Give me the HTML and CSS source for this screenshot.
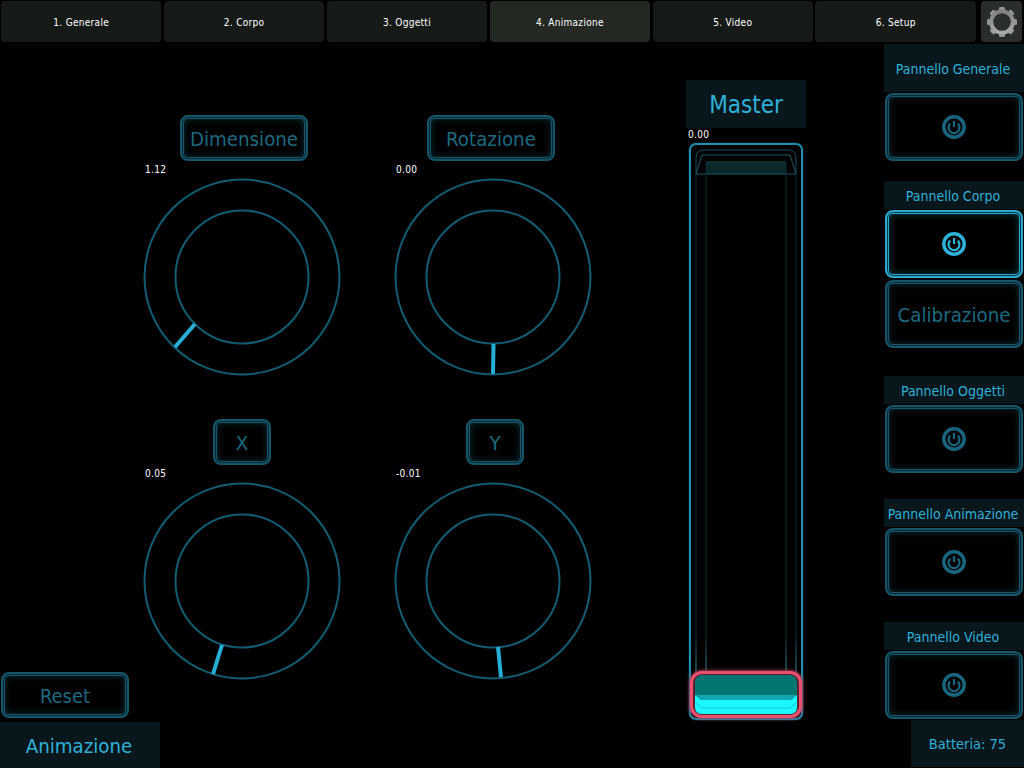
FILE: index.html
```html
<!DOCTYPE html>
<html lang="en">
<head>
    <meta charset="UTF-8">
    <meta name="viewport" content="width=device-width, initial-scale=1.0">
    <title>Animazione</title>
    <link rel="stylesheet" href="styles.css">
</head>
<body>
    <nav class="tabs">
        <div class="tab">1. Generale</div>
        <div class="tab">2. Corpo</div>
        <div class="tab">3. Oggetti</div>
        <div class="tab active">4. Animazione</div>
        <div class="tab">5. Video</div>
        <div class="tab">6. Setup</div>
        <div class="gear-button">
            <svg width="40" height="40" viewBox="0 0 40 40">
                <defs>
                    <linearGradient id="gearFill" x1="0" y1="0" x2="0" y2="1">
                        <stop offset="0" stop-color="#7f817f"/>
                        <stop offset="1" stop-color="#a8aaa8"/>
                    </linearGradient>
                </defs>
                <g fill="#959795">
                    <rect x="17" y="5" width="6" height="5" rx="1.5"/>
                    <rect x="17" y="5" width="6" height="5" rx="1.5" transform="rotate(45 20 20)"/>
                    <rect x="17" y="5" width="6" height="5" rx="1.5" transform="rotate(90 20 20)"/>
                    <rect x="17" y="5" width="6" height="5" rx="1.5" transform="rotate(135 20 20)"/>
                    <rect x="17" y="5" width="6" height="5" rx="1.5" transform="rotate(180 20 20)"/>
                    <rect x="17" y="5" width="6" height="5" rx="1.5" transform="rotate(225 20 20)"/>
                    <rect x="17" y="5" width="6" height="5" rx="1.5" transform="rotate(270 20 20)"/>
                    <rect x="17" y="5" width="6" height="5" rx="1.5" transform="rotate(315 20 20)"/>
                </g>
                <circle cx="20" cy="20" r="10.8" fill="none" stroke="url(#gearFill)" stroke-width="4"/>
            </svg>
        </div>
    </nav>

    <div class="workspace">
        <section class="left">
            <div class="knobs">
                <div class="knob">
                    <div class="frame-button wide nudge-right">Dimensione</div>
                    <div class="knob-body">
                        <div class="value">1.12</div>
                        <svg class="dial" width="198" height="198" viewBox="0 0 198 198">
                            <circle cx="99" cy="99" r="97.5"/>
                            <circle cx="99" cy="99" r="66.5"/>
                            <line x1="52" y1="146" x2="32" y2="169"/>
                        </svg>
                    </div>
                </div>
                <div class="knob">
                    <div class="frame-button wide nudge-left">Rotazione</div>
                    <div class="knob-body">
                        <div class="value">0.00</div>
                        <svg class="dial" width="198" height="198" viewBox="0 0 198 198">
                            <circle cx="99" cy="99" r="97.5"/>
                            <circle cx="99" cy="99" r="66.5"/>
                            <line x1="99.5" y1="166" x2="99" y2="196"/>
                        </svg>
                    </div>
                </div>
                <div class="knob">
                    <div class="frame-button small">X</div>
                    <div class="knob-body">
                        <div class="value">0.05</div>
                        <svg class="dial" width="198" height="198" viewBox="0 0 198 198">
                            <circle cx="99" cy="99" r="97.5"/>
                            <circle cx="99" cy="99" r="66.5"/>
                            <line x1="79" y1="163" x2="70" y2="192"/>
                        </svg>
                    </div>
                </div>
                <div class="knob">
                    <div class="frame-button small nudge-right">Y</div>
                    <div class="knob-body">
                        <div class="value">-0.01</div>
                        <svg class="dial" width="198" height="198" viewBox="0 0 198 198">
                            <circle cx="99" cy="99" r="97.5"/>
                            <circle cx="99" cy="99" r="66.5"/>
                            <line x1="104" y1="165" x2="107" y2="195"/>
                        </svg>
                    </div>
                </div>
            </div>
            <div class="footer">
                <div class="frame-button reset">Reset</div>
                <div class="heading page-title">Animazione</div>
            </div>
        </section>

        <section class="master">
            <div class="heading master-title">Master</div>
            <div class="value master-value">0.00</div>
            <div class="fader">
                <svg class="fader-lines" width="114" height="577" viewBox="0 0 114 577">
                    <defs>
                        <linearGradient id="faderRail" gradientUnits="userSpaceOnUse" x1="0" y1="31" x2="0" y2="530">
                            <stop offset="0" stop-color="#0c2a33"/>
                            <stop offset="0.92" stop-color="#0c2a33"/>
                            <stop offset="1" stop-color="#3f8c9c"/>
                        </linearGradient>
                        <linearGradient id="faderCap" x1="0" y1="0" x2="0" y2="1">
                            <stop offset="0" stop-color="#0d2f30"/>
                            <stop offset="1" stop-color="#0a2224"/>
                        </linearGradient>
                    </defs>
                    <rect x="17" y="18" width="80" height="13" fill="url(#faderCap)"/>
                    <path d="M7 31 V15 Q7 7 15 7 H99 Q107 7 107 15 V31" fill="none" stroke="#14505f"/>
                    <path d="M7 31 L13 12 H101 L107 31 Z" fill="none" stroke="#185a6a"/>
                    <path d="M7 31 V530 M107 31 V530 M17 18 V530 M97 18 V530" fill="none" stroke="url(#faderRail)"/>
                </svg>
                <div class="fader-handle">
                    <svg class="handle-fill" width="102" height="39" viewBox="0 0 102 39">
                        <rect width="102" height="39" rx="7" fill="#007572"/>
                        <path d="M1 20 H101 L96 25 H6 Z" fill="#10a8b0"/>
                        <path d="M0 20 L6 25 H96 L102 20 V32 Q102 39 95 39 H7 Q0 39 0 32 Z" fill="#1cf8ff"/>
                        <path d="M1 28 L7 33 H95 L101 28" fill="none" stroke="#12c4d4"/>
                    </svg>
                </div>
            </div>
        </section>

        <aside class="panels">
            <div class="heading panel-title first">Pannello Generale</div>
            <div class="frame-button panel">
                <svg class="power" width="26" height="26" viewBox="0 0 26 26">
                    <circle cx="13" cy="13" r="10.2"/>
                    <path d="M9.2 9.6 A5.5 5.5 0 1 0 16.8 9.6 M13 7 V13"/>
                </svg>
            </div>
            <div class="heading panel-title gap-corpo">Pannello Corpo</div>
            <div class="frame-button panel on">
                <svg class="power" width="26" height="26" viewBox="0 0 26 26">
                    <circle cx="13" cy="13" r="10.2"/>
                    <path d="M9.2 9.6 A5.5 5.5 0 1 0 16.8 9.6 M13 7 V13"/>
                </svg>
            </div>
            <div class="frame-button panel calibration">Calibrazione</div>
            <div class="heading panel-title gap-oggetti">Pannello Oggetti</div>
            <div class="frame-button panel">
                <svg class="power" width="26" height="26" viewBox="0 0 26 26">
                    <circle cx="13" cy="13" r="10.2"/>
                    <path d="M9.2 9.6 A5.5 5.5 0 1 0 16.8 9.6 M13 7 V13"/>
                </svg>
            </div>
            <div class="heading panel-title gap-next">Pannello Animazione</div>
            <div class="frame-button panel">
                <svg class="power" width="26" height="26" viewBox="0 0 26 26">
                    <circle cx="13" cy="13" r="10.2"/>
                    <path d="M9.2 9.6 A5.5 5.5 0 1 0 16.8 9.6 M13 7 V13"/>
                </svg>
            </div>
            <div class="heading panel-title gap-next">Pannello Video</div>
            <div class="frame-button panel">
                <svg class="power" width="26" height="26" viewBox="0 0 26 26">
                    <circle cx="13" cy="13" r="10.2"/>
                    <path d="M9.2 9.6 A5.5 5.5 0 1 0 16.8 9.6 M13 7 V13"/>
                </svg>
            </div>
            <div class="heading battery">Batteria: 75</div>
        </aside>
    </div>
</body>
</html>
```

FILE: styles.css
```css
body {
    margin: 0;
    width: 1024px;
    height: 768px;
    overflow: hidden;
    background-color: #000;
    color: #fff;
    font-family: "DejaVu Sans Condensed", "DejaVu Sans", sans-serif;
}

/* top tabs */
.tabs {
    display: flex;
    gap: 2.5px;
    height: 41px;
    padding: 1px 0 2px 1px;
}
.tab {
    flex: none;
    width: 160.4px;
    box-sizing: border-box;
    padding-top: 1px;
    display: flex;
    align-items: center;
    justify-content: center;
    font-size: 10px;
    letter-spacing: 0.3px;
    background-color: #161a17;
    border-radius: 4px;
}
.tab.active {
    background-color: #232823;
}
.gear-button {
    width: 41px;
    margin-left: 3px;
    background-color: #2a2e2a;
    border-radius: 4px;
    display: flex;
    align-items: center;
    justify-content: center;
}

.workspace {
    display: flex;
    height: 724px;
}

/* shared pieces */
.heading {
    box-sizing: border-box;
    padding-top: 1px;
    display: flex;
    align-items: center;
    justify-content: center;
    background-color: #08171c;
    color: #2fb0d8;
}
.frame-button {
    box-sizing: border-box;
    padding-top: 1px;
    display: flex;
    align-items: center;
    justify-content: center;
    border: 2px solid #14566a;
    border-radius: 8px;
    box-shadow: inset 0 0 0 1px #082630, inset 0 0 0 2px #17586d, inset 0 0 6px 3px #08242d;
    color: #1c6a80;
    font-size: 20.3px;
}
.value {
    font-size: 10px;
    line-height: 12px;
    letter-spacing: 0.3px;
    color: #fff;
}

/* knobs and the bottom-left block share one grid cell, they overlap in height */
.left {
    width: 686px;
    display: grid;
    grid-template-rows: 724px;
}
.knobs,
.footer {
    grid-area: 1 / 1;
}
.knobs {
    display: grid;
    grid-template-columns: 251px 251px;
    grid-auto-rows: 304px;
    padding: 71px 0 0 116.5px;
}
.knob {
    display: flex;
    flex-direction: column;
    align-items: center;
}
.frame-button.wide {
    width: 128px;
    height: 46px;
}
.frame-button.small {
    width: 58px;
    height: 46px;
}
.nudge-right {
    margin-left: 4px;
}
.nudge-left {
    margin-right: 4px;
}
.knob-body {
    width: 198px;
    padding-top: 3px;
}
.knob-body .value {
    padding-left: 2px;
    margin-bottom: 2px;
}
.dial {
    display: block;
}
.dial circle {
    fill: none;
    stroke: #125d73;
    stroke-width: 2;
}
.dial line {
    stroke: #26aed6;
    stroke-width: 4;
}

.footer {
    align-self: end;
}
.frame-button.reset {
    width: 128px;
    height: 46px;
    margin: 0 0 4px 1px;
    font-size: 20px;
}
.page-title {
    width: 160px;
    height: 46px;
    padding-right: 2px;
    font-size: 20.3px;
}

/* master fader */
.master {
    width: 198px;
    padding-top: 36px;
    box-sizing: border-box;
}
.master-title {
    width: 120px;
    height: 48px;
    font-size: 24px;
}
.master-value {
    margin: 1px 0 2px 2px;
    height: 12px;
}
.fader {
    position: relative;
    box-sizing: border-box;
    width: 114px;
    height: 577px;
    margin: 2px 0 0 3px;
    border: 2px solid #1f8fb0;
    border-radius: 7px;
    box-shadow: 0 0 2px #14566a;
}
.fader-lines {
    position: absolute;
    left: -2px;
    top: -2px;
}
.fader-handle {
    position: absolute;
    left: -1px;
    right: -1px;
    bottom: 0;
    height: 47px;
    box-sizing: border-box;
    padding: 1px 2px;
    border: 3px solid #e8506e;
    border-radius: 12px;
    background-color: #5c1f30;
    box-shadow: 0 0 3px 1px #a33a55;
}
.handle-fill {
    display: block;
}

/* right column */
.panels {
    width: 140px;
    display: flex;
    flex-direction: column;
    align-items: flex-end;
}
.panel-title {
    width: 140px;
    height: 28px;
    padding-right: 2px;
    font-size: 14px;
    flex-shrink: 0;
}
.panel-title.first {
    height: 48px;
    margin-bottom: 1px;
}
.panel-title.gap-corpo {
    margin-top: 20px;
    margin-bottom: 1px;
}
.panel-title.gap-oggetti {
    margin-top: 28px;
    margin-bottom: 1px;
}
.panel-title.gap-next {
    margin-top: 26px;
    margin-bottom: 1px;
}
.frame-button.panel {
    width: 138px;
    height: 68px;
    margin-right: 1px;
    flex-shrink: 0;
}
.frame-button.panel.on {
    border-color: #2aa9cc;
    box-shadow: inset 0 0 0 1px #0a3a48, inset 0 0 0 2px #2aa9cc, inset 0 0 6px 3px #0b3442;
}
.frame-button.calibration {
    margin-top: 2px;
}
.power {
    display: block;
    margin-bottom: 1px;
}
.power circle,
.power path {
    fill: none;
    stroke: #17667f;
    stroke-width: 3.4;
}
.power path {
    stroke-width: 2.2;
}
.panel.on .power circle,
.panel.on .power path {
    stroke: #2cb4dc;
}
.battery {
    width: 113px;
    height: 47px;
    margin-top: 1px;
    font-size: 14.5px;
}
```
